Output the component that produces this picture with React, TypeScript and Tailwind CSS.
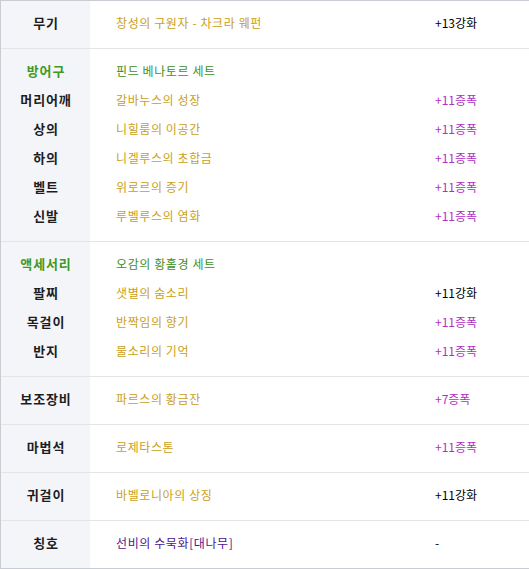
import React from "react";

type Item = { label: string; name: string; stat?: string; kind?: "set" | "title" };

const gold = "text-[#c9a020]";

const sections: Item[][] = [
  [{ label: "무기", name: "창성의 구원자 - 차크라 웨펀", stat: "+13강화" }],
  [
    { label: "방어구", name: "핀드 베나토르 세트", kind: "set" },
    { label: "머리어깨", name: "갈바누스의 성장", stat: "+11증폭" },
    { label: "상의", name: "니힐룸의 이공간", stat: "+11증폭" },
    { label: "하의", name: "니겔루스의 초합금", stat: "+11증폭" },
    { label: "벨트", name: "위로르의 증기", stat: "+11증폭" },
    { label: "신발", name: "루벨루스의 염화", stat: "+11증폭" },
  ],
  [
    { label: "액세서리", name: "오감의 황홀경 세트", kind: "set" },
    { label: "팔찌", name: "샛별의 숨소리", stat: "+11강화" },
    { label: "목걸이", name: "반짝임의 향기", stat: "+11증폭" },
    { label: "반지", name: "물소리의 기억", stat: "+11증폭" },
  ],
  [{ label: "보조장비", name: "파르스의 황금잔", stat: "+7증폭" }],
  [{ label: "마법석", name: "로제타스톤", stat: "+11증폭" }],
  [{ label: "귀걸이", name: "바벨로니아의 상징", stat: "+11강화" }],
  [{ label: "칭호", name: "선비의 수묵화[대나무]", stat: "-", kind: "title" }],
];

function statColor(stat?: string) {
  if (!stat) return "";
  return stat.includes("증폭") ? "text-[#b030c4]" : "text-black";
}

export default function App() {
  return (
    <div
      className="w-[529px] h-[569px] bg-white border-l border-t border-b border-[#c9ccd3] text-[12px] overflow-hidden"
      style={{ fontFamily: '"Noto Sans CJK KR", "Noto Sans", sans-serif' }}
    >
      {sections.map((rows, si) => {
        const multi = rows.length > 1;
        const rowH = multi ? "h-[29px]" : "h-[47px]";
        const pad = multi ? "py-[9px]" : "";
        return (
          <div key={si} className={`flex ${si > 0 ? "border-t border-[#e4e4e4]" : ""}`}>
            <div className={`w-[89px] bg-[#f4f5f9] flex flex-col ${pad}`}>
              {rows.map((r, i) => (
                <div
                  key={i}
                  className={`${rowH} flex items-center justify-center pb-[3px] pl-[1px] text-[13px] tracking-[0.9px] font-bold ${
                    r.kind === "set" ? "text-[#3f9a22]" : "text-[#1d1d1f]"
                  }`}
                >
                  {r.label}
                </div>
              ))}
            </div>
            <div className={`flex-1 flex flex-col ${pad}`}>
              {rows.map((r, i) => (
                <div key={i} className={`${rowH} flex items-center pb-[3px]`}>
                  <div
                    className={`w-[345px] pl-[26px] tracking-[0.6px] ${
                      r.kind === "set"
                        ? "text-[#3f8f22]"
                        : r.kind === "title"
                        ? "text-[#4a168e]"
                        : gold
                    }`}
                  >
                    {r.name}
                  </div>
                  <div className={`flex-1 ${statColor(r.stat)}`}>{r.stat}</div>
                </div>
              ))}
            </div>
          </div>
        );
      })}
    </div>
  );
}
